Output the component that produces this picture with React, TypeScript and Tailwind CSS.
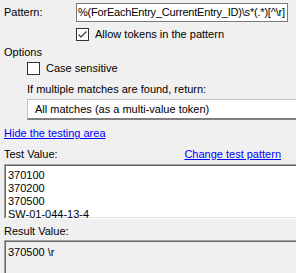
function CheckBox({ checked }: { checked?: boolean }) {
  return (
    <span className="flex h-[13px] w-[13px] shrink-0 items-center justify-center border border-[#333333] bg-white">
      {checked && (
        <svg width="11" height="11" viewBox="0 0 11 11" fill="none">
          <path d="M1.5 5.5 L4 8 L9.5 2.5" stroke="#333333" strokeWidth="1.1" />
        </svg>
      )}
    </span>
  );
}

function Sunken({ className, children }: { className: string; children?: React.ReactNode }) {
  return (
    <div className={`border-t border-l border-t-[#a0a0a0] border-l-[#a0a0a0] border-b border-b-white ${className}`}>
      <div className="h-full border-t border-l border-t-[#696969] border-l-[#696969] border-b border-b-[#e3e3e3]">
        {children}
      </div>
    </div>
  );
}

export default function App() {
  return (
    <div
      className="h-[273px] w-[296px] overflow-hidden bg-[#f0f0f0] text-[11px] leading-[13px] text-black"
      style={{ fontFamily: '"Liberation Sans", Arial, sans-serif' }}
    >
      {/* pattern */}
      <div className="flex items-center pt-[3px]">
        <span className="w-[76px] pl-[4px]">Pattern:</span>
        <div className="flex h-[19px] w-[212px] items-center overflow-hidden border border-[#7a7a7a] bg-white pl-[1px] tracking-[-0.2px] whitespace-nowrap">
          %(ForEachEntry_CurrentEntry_ID)\s*(.*)[^\r]
        </div>
      </div>
      <div className="mt-[6px] flex items-center gap-[6px] pl-[76px]">
        <CheckBox checked />
        <span>Allow tokens in the pattern</span>
      </div>

      {/* options */}
      <div className="mt-[5px] pl-[4px]">Options</div>
      <div className="mt-[3px] flex items-center gap-[6px] pl-[27px]">
        <CheckBox />
        <span>Case sensitive</span>
      </div>
      <div className="mt-[8px] pl-[27px]">If multiple matches are found, return:</div>
      <div className="mt-[3px] pl-[27px]">
        <div className="flex h-[21px] items-center border-t border-l border-[#c0c0c0] border-b-2 border-b-[#808080] bg-white pl-[7px]">
          All matches (as a multi-value token)
        </div>
      </div>

      <div className="mt-[7px] pl-[4px]">
        <span className="cursor-pointer text-[#0000ff] underline">Hide the testing area</span>
      </div>

      {/* test area */}
      <div className="mt-[8px] flex items-center justify-between pr-[15px] pl-[4px]">
        <span>Test Value:</span>
        <span className="cursor-pointer text-[#0000ff] underline">Change test pattern</span>
      </div>
      <Sunken className="mt-[3px] ml-[4px] h-[55px] bg-white">
        <div className="pt-[3px] pl-[2px]">
          <div>370100</div>
          <div>370200</div>
          <div>370500</div>
          <div>SW-01-044-13-4</div>
        </div>
      </Sunken>

      <div className="mt-[6px] pl-[4px]">Result Value:</div>
      <Sunken className="mt-[2px] ml-[4px] h-[40px] bg-[#f0f0f0]">
        <div className="pt-[4px] pl-[2px]">370500 \r</div>
      </Sunken>
    </div>
  );
}
